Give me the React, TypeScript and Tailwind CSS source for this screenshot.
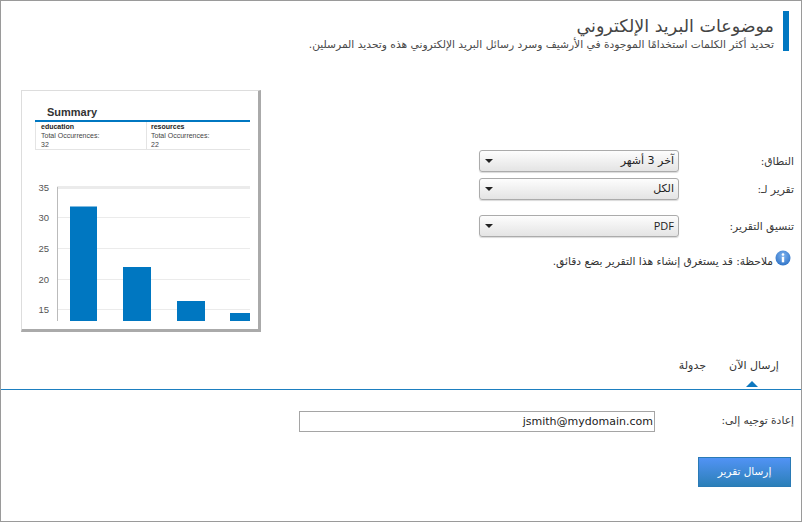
import React from "react";

const arabic = "font-['DejaVu_Sans','Noto_Sans',sans-serif]";

const Dropdown = ({ value, latin }: { value: string; latin?: boolean }) => (
  <div className="flex h-[22px] w-[200px] items-center justify-between rounded-[3px] border border-[#ababab] bg-gradient-to-b from-[#fdfdfd] to-[#e4e4e4] pl-[5px] pr-[4px] shadow-[0_1px_1px_rgba(0,0,0,0.15)]">
    <span className={`text-[11px] text-[#222] ${latin ? "font-['Open_Sans',sans-serif]" : ""}`}>{value}</span>
    <svg width="8" height="4" viewBox="0 0 8 4">
      <path d="M0 0h8L4 4z" fill="#222" />
    </svg>
  </div>
);

const FormRow = ({ label, children, className = "" }: { label: string; children: React.ReactNode; className?: string }) => (
  <div className={`flex items-center ${className}`}>
    <label className="w-[115px] pt-[2px] text-[10.7px] text-[#3a3a3a]">{label}</label>
    {children}
  </div>
);

const Thumbnail = () => (
  <div dir="ltr" className="h-[242px] w-[240px] shrink-0 border-t border-l border-t-[#ddd] border-l-[#ddd] border-r-[3px] border-b-[3px] border-r-[#aaaaaa] border-b-[#aaaaaa] bg-white pl-[13px] pt-[14px] font-['Liberation_Sans',sans-serif]">
    <div className="pl-[12px] text-[11px] leading-[14px] font-bold text-[#333]">Summary</div>
    <div className="mt-[1px] h-[2px] w-[215px] bg-[#0077c1]" />
    <div className="flex h-[28px] w-[215px] border-b border-[#e4e4e4] text-[7px] leading-[9px] text-[#444]">
      <div className="w-[112px] border-r border-l border-[#e4e4e4] pl-[5px]">
        <div className="font-bold text-[#222]">education</div>
        <div>Total Occurrences:</div>
        <div>32</div>
      </div>
      <div className="pl-[4px]">
        <div className="font-bold text-[#222]">resources</div>
        <div>Total Occurrences:</div>
        <div>22</div>
      </div>
    </div>
    <svg width="215" height="141" viewBox="0 0 215 141" className="mt-[30px] block">
      <rect x="22" y="6" width="193" height="3" fill="#ebebeb" />
      {[37, 68, 99, 129].map((y) => (
        <rect key={y} x="22" y={y} width="193" height="1" fill="#ebebeb" />
      ))}
      <rect x="22" y="7" width="1" height="134" fill="#bbb" />
      {[
        ["35", 11],
        ["30", 41],
        ["25", 72],
        ["20", 103],
        ["15", 133],
      ].map(([t, y]) => (
        <text key={t} x="14" y={y} textAnchor="end" fontSize="9.500" fill="#555">
          {t}
        </text>
      ))}
      <rect x="35" y="26.500" width="27" height="114.500" fill="#0077c1" />
      <rect x="88" y="87" width="28" height="54" fill="#0077c1" />
      <rect x="142" y="121" width="28" height="20" fill="#0077c1" />
      <rect x="195" y="133" width="20" height="8" fill="#0077c1" />
    </svg>
  </div>
);

export default function App() {
  return (
    <div dir="rtl" className={`h-[522px] w-[802px] overflow-hidden border border-[#9a9a9a] bg-white ${arabic}`}>
      <header className="mt-[10px] mr-[12px] flex h-[40px] border-r-[6px] border-[#0077c1] pr-[9px]">
        <div>
          <h1 className="mt-[3px] text-[17.5px] leading-[24px] font-normal text-[#444]">موضوعات البريد الإلكتروني</h1>
          <p className="text-[10.7px] leading-[13px] text-[#4a4a4a]">
            تحديد أكثر الكلمات استخدامًا الموجودة في الأرشيف وسرد رسائل البريد الإلكتروني هذه وتحديد المرسلين.
          </p>
        </div>
      </header>

      <section className="mt-[39px] flex h-[242px] justify-between pr-[7px] pl-[20px]">
        <div className="pt-[60px]">
          <FormRow label="النطاق:">
            <Dropdown value="آخر 3 أشهر" />
          </FormRow>
          <FormRow label="تقرير لـ:" className="mt-[6px]">
            <Dropdown value="الكل" />
          </FormRow>
          <FormRow label="تنسيق التقرير:" className="mt-[15px]">
            <Dropdown value="PDF" latin />
          </FormRow>
          <div className="mt-[13px] flex items-start pr-[3px]">
            <svg width="16" height="16" viewBox="0 0 16 16" className="shrink-0">
              <defs>
                <radialGradient id="info" cx="50%" cy="35%" r="70%">
                  <stop offset="0%" stopColor="#7fb4f0" />
                  <stop offset="100%" stopColor="#2a6fc4" />
                </radialGradient>
              </defs>
              <circle cx="8" cy="8" r="7.500" fill="url(#info)" />
              <circle cx="8" cy="4.500" r="1.300" fill="#fff" />
              <rect x="6.800" y="6.800" width="2.400" height="5.500" fill="#fff" />
            </svg>
            <span className="mt-[5px] mr-[2px] text-[10.7px] leading-[14px] text-[#333]">ملاحظة: قد يستغرق إنشاء هذا التقرير بضع دقائق.</span>
          </div>
        </div>
        <Thumbnail />
      </section>

      <nav className="mt-[22px] flex h-[36px] items-start border-b border-[#1d7fc0] pr-[19px] text-[11px] text-[#333]">
        <div className="relative mt-[3px] w-[56px] text-center leading-[18px]">
          إرسال الآن
          <span className="absolute top-[24px] left-[20px] h-0 w-0 border-x-[6px] border-b-[6px] border-x-transparent border-b-[#0f79c0]" />
        </div>
        <div className="mt-[3px] mr-[20px] leading-[18px]">جدولة</div>
      </nav>

      <form className="mt-[21px] flex items-center pr-[7px]">
        <label className="w-[139px] text-[10.7px] text-[#3a3a3a]">إعادة توجيه إلى:</label>
        <input
          readOnly
          value="jsmith@mydomain.com"
          dir="ltr"
          className="h-[21px] w-[356px] border border-[#a5a5a5] bg-white pr-[1px] pl-[2px] text-right font-['DejaVu_Sans',sans-serif] text-[11px] text-[#222]"
        />
      </form>
      <div className="mt-[25px] pr-[10px]">
        <button className="h-[30px] w-[93px] border border-[#2a7ab5] bg-gradient-to-b from-[#5193f5] to-[#2a7fb8] text-[10.500px] text-white">
          إرسال تقرير
        </button>
      </div>
    </div>
  );
}
